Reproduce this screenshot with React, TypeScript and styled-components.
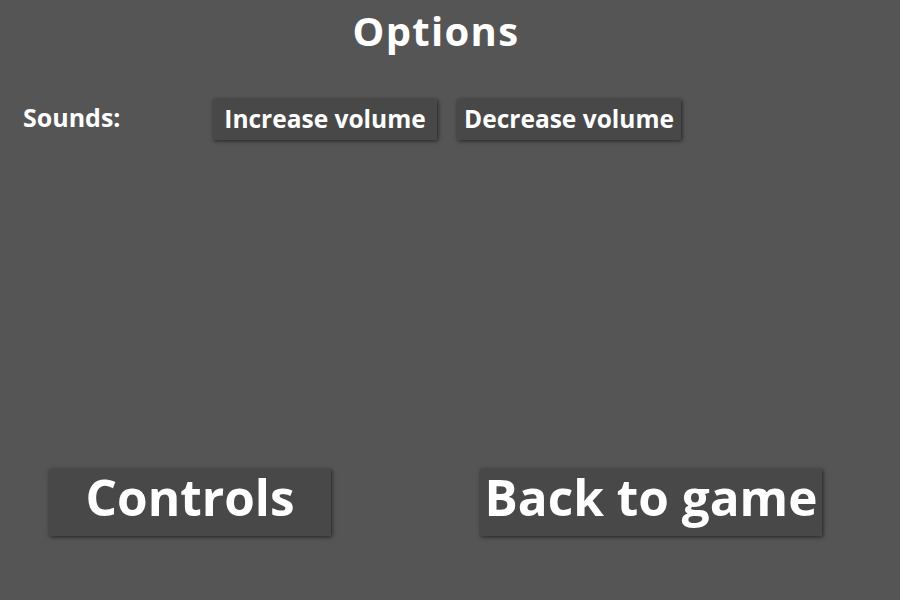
import React from "react"
import styled, { createGlobalStyle } from "styled-components"

const GlobalStyle = createGlobalStyle`
	html, body {
		margin: 0;
		padding: 0;
		background: #555555;
		font-family: "Open Sans", "Liberation Sans", sans-serif;
		color: #ffffff;
	}
`

const App: React.FC = () => {
	return (
		<>
			<GlobalStyle />
			<Page>
				<Title>Options</Title>
				<SettingRow>
					<Label>Sounds:</Label>
					<SmallButton>Increase volume</SmallButton>
					<SmallButton>Decrease volume</SmallButton>
				</SettingRow>
				<Spacer />
				<BottomRow>
					<BigButton $width={282}>Controls</BigButton>
					<BigButton $width={342}>Back to game</BigButton>
				</BottomRow>
			</Page>
		</>
	)
}

export default App

const Page = styled.div`
	display: flex;
	flex-direction: column;
	width: 900px;
	height: 600px;
	box-sizing: border-box;
	padding-top: 6px;
`

const Title = styled.h1`
	margin: 0;
	padding-right: 28px;
	text-align: center;
	font-size: 40px;
	font-weight: 700;
	letter-spacing: 1.3px;
	line-height: 50px;
`

const SettingRow = styled.div`
	display: flex;
	align-items: center;
	margin-top: 43px;
	padding-left: 23px;
	gap: 20px;
`

const Label = styled.span`
	width: 170px;
	padding-bottom: 5px;
	font-size: 25px;
	font-weight: 700;
`

const SmallButton = styled.button`
	width: 224px;
	height: 41px;
	padding: 0 0 2px;
	border: none;
	background: #484848;
	color: #ffffff;
	font-family: inherit;
	font-size: 24.5px;
	font-weight: 700;
	box-shadow: 1px 1px 4px rgba(0, 0, 0, 0.6);
`

const Spacer = styled.div`
	flex: 1;
`

const BottomRow = styled.div`
	display: flex;
	padding-left: 49px;
	gap: 149px;
	margin-bottom: 64px;
`

const BigButton = styled.button<{ $width: number }>`
	width: ${(p) => p.$width}px;
	height: 67px;
	padding: 0 0 10px;
	border: none;
	background: #484848;
	color: #ffffff;
	font-family: inherit;
	font-size: 49.5px;
	font-weight: 700;
	line-height: 1;
	box-shadow: 1px 1px 4px rgba(0, 0, 0, 0.6);
`
